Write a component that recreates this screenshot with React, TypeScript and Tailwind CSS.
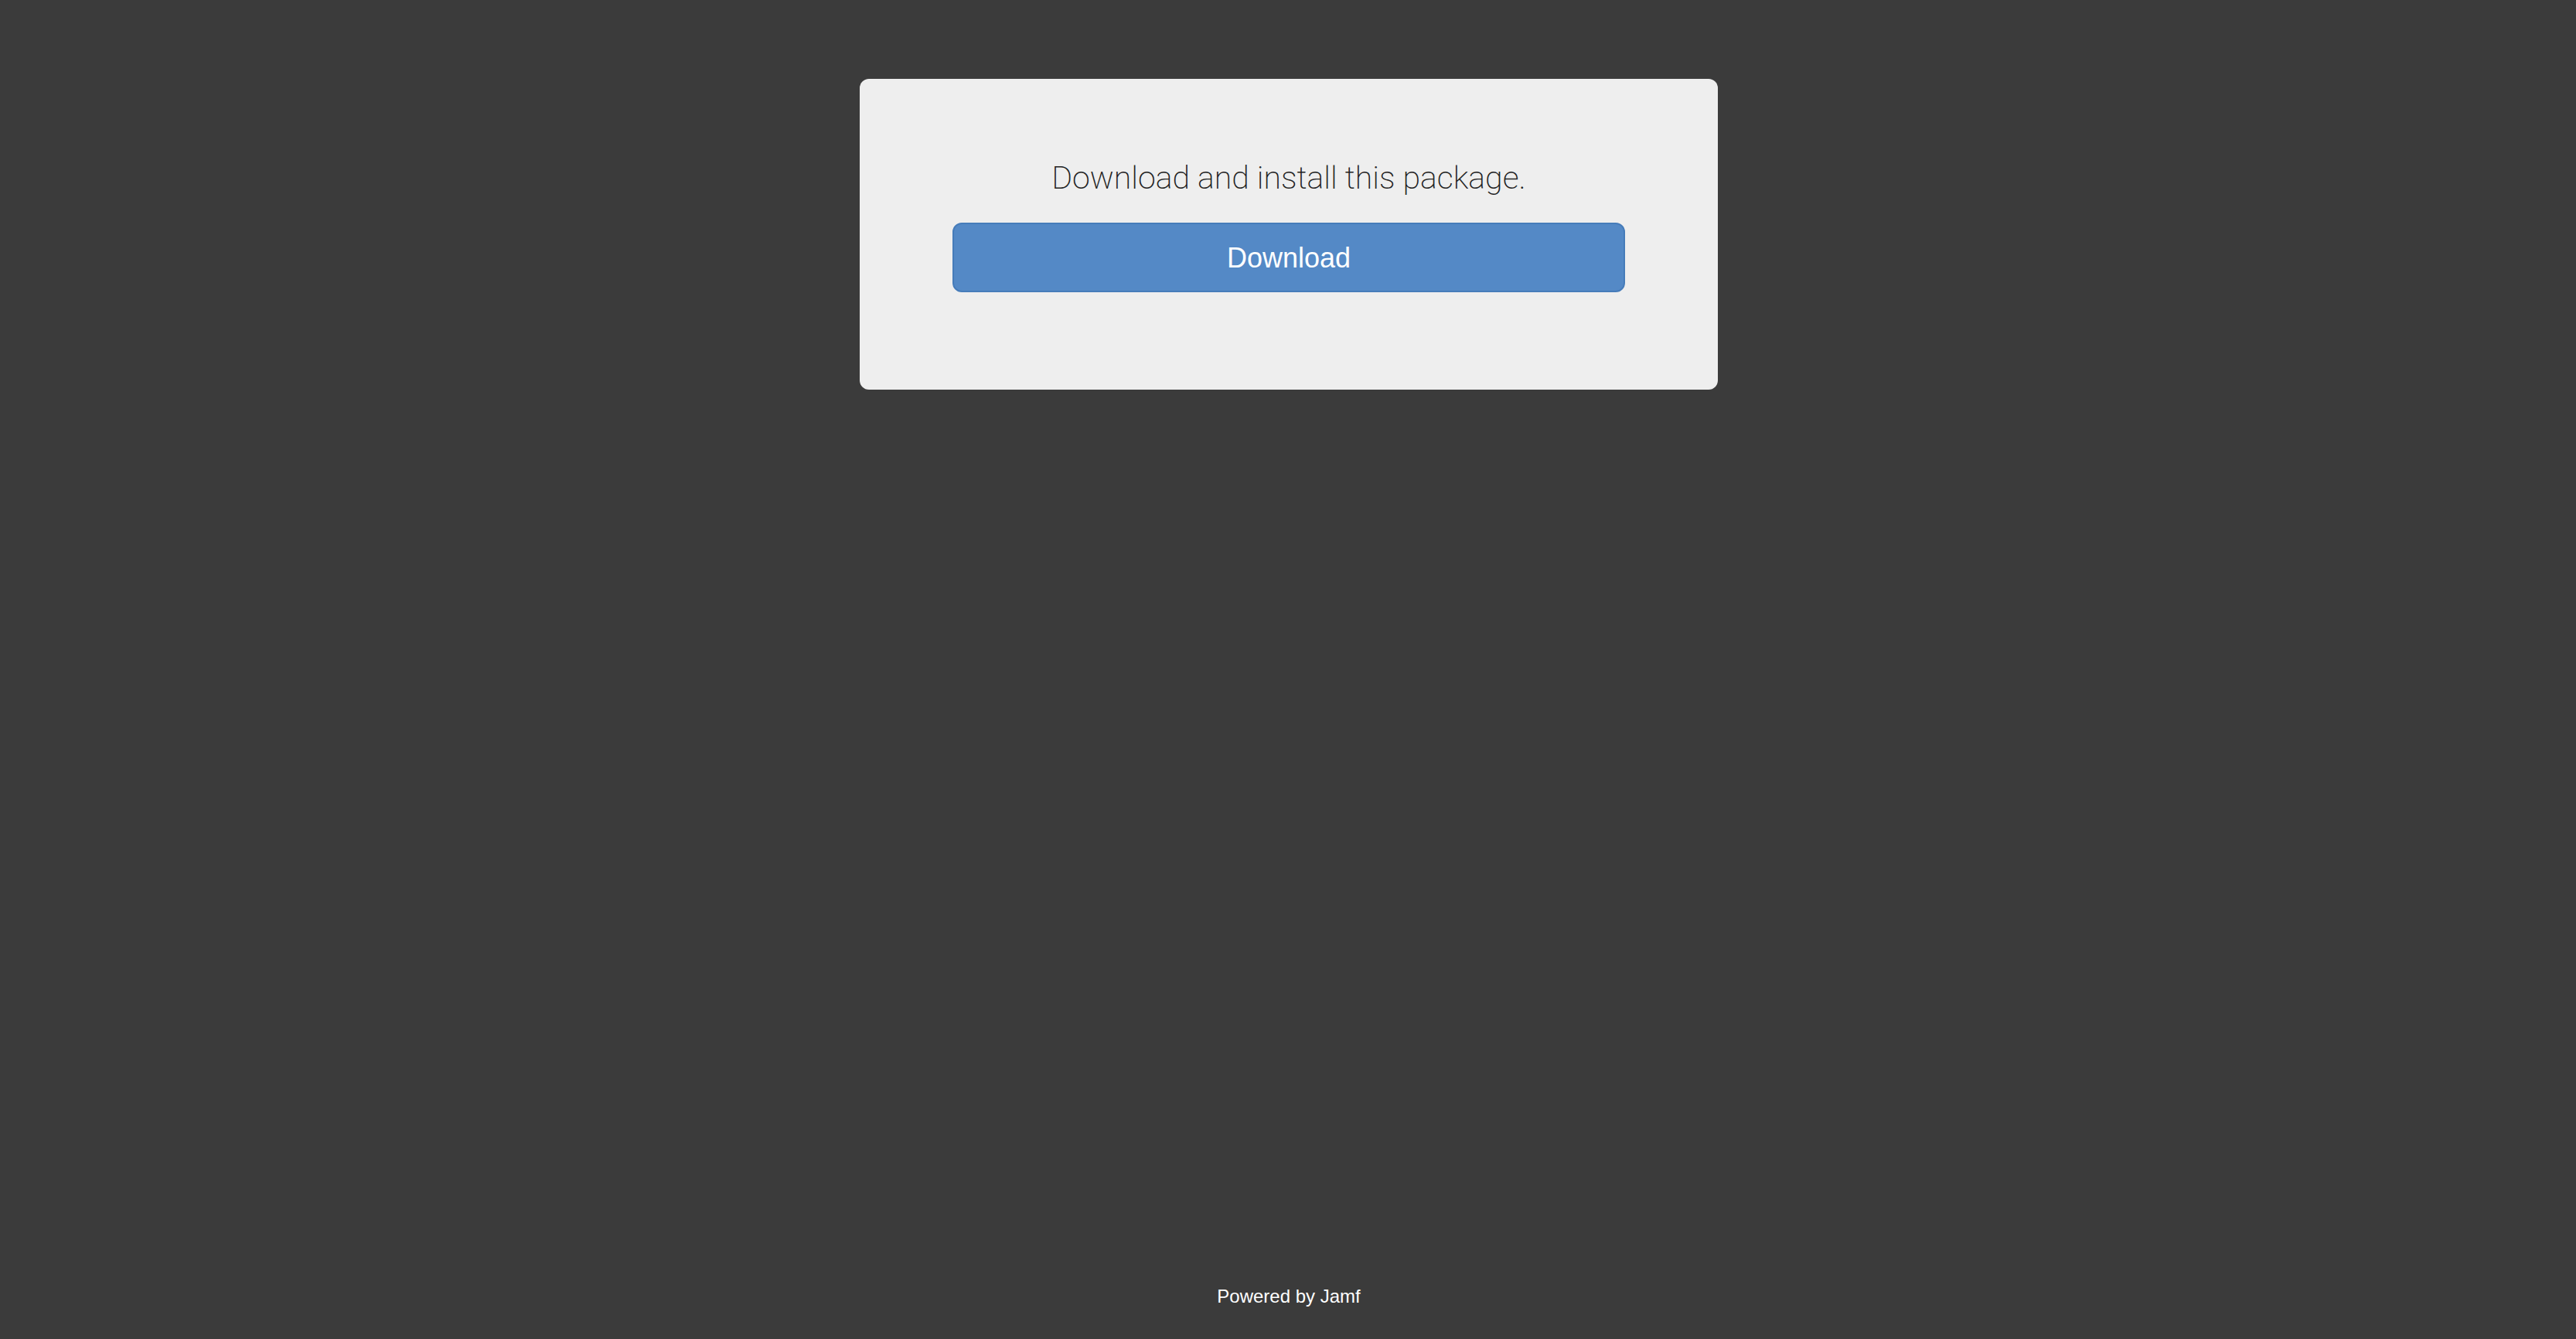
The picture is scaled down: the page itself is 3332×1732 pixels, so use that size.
import React from "react";

export default function App(): React.JSX.Element {
  function handleDownload() {
    console.log("download requested");
  }

  return (
    <div className="min-h-screen flex flex-col items-center pl-0.5 bg-[#3b3b3b] font-['Liberation_Sans',Arial,sans-serif]">
      <main className="w-full max-w-[1110px] mt-[102px] px-[120px] pt-[100px] pb-[126px] rounded-xl bg-[#eeeeee] text-center">
        <h1 className="font-['Roboto','Liberation_Sans',sans-serif] font-extralight text-[41px] leading-[56px] mb-[30px] text-[#222222]">
          Download and install this package.
        </h1>
        <button
          type="button"
          onClick={handleDownload}
          className="block w-full h-[90px] pt-0.5 rounded-xl border-2 border-[#467cba] bg-[#5489c6] text-white text-[36px]"
        >
          Download
        </button>
      </main>
      <footer className="mt-auto pb-10 text-2xl leading-[30px] text-white">
        Powered by Jamf
      </footer>
    </div>
  );
}
